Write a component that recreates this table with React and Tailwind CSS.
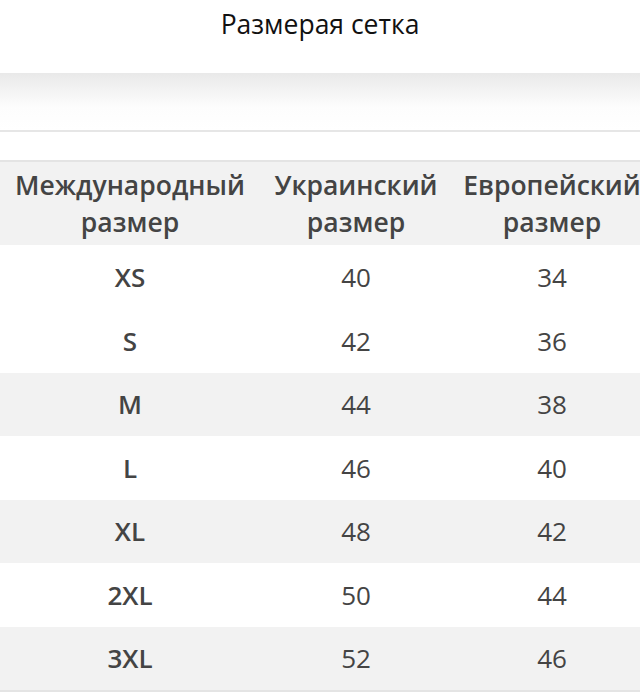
import React from "react";

const rows = [
  { intl: "XS", ua: "40", eu: "34", gray: false, h: "h-[64px]" },
  { intl: "S", ua: "42", eu: "36", gray: false, h: "h-[64px]" },
  { intl: "M", ua: "44", eu: "38", gray: true, h: "h-[63px]" },
  { intl: "L", ua: "46", eu: "40", gray: false, h: "h-[64px]" },
  { intl: "XL", ua: "48", eu: "42", gray: true, h: "h-[63px]" },
  { intl: "2XL", ua: "50", eu: "44", gray: false, h: "h-[64px]" },
  { intl: "3XL", ua: "52", eu: "46", gray: true, h: "h-[63px]" },
];

const App = () => {
  return (
    <div className="w-[640px] h-[699px] overflow-hidden bg-white font-['Open_Sans',sans-serif]">
      {/* Title */}
      <div className="h-[73px] pt-[6px]">
        <h1 className="text-center text-[26.5px] leading-[36px] text-[#111]">
          Размерая сетка
        </h1>
      </div>

      {/* Shaded band */}
      <div className="h-[57px] bg-gradient-to-b from-[#e9e9e9] via-[#fdfdfd] via-60% to-white"></div>
      <div className="h-[2px] bg-[#e6e6e6]"></div>
      <div className="h-[28px]"></div>
      <div className="h-[2px] bg-[#e4e4e4]"></div>

      {/* Table */}
      <div className="w-[652px]">
        <div className="grid grid-cols-[260px_192px_200px] h-[83px] items-center bg-[#f2f2f2] text-[#444] text-[26.5px] leading-[37px] font-semibold text-center">
          <div>
            Международный
            <br />
            размер
          </div>
          <div>
            Украинский
            <br />
            размер
          </div>
          <div className="whitespace-nowrap">
            Европейский
            <br />
            размер
          </div>
        </div>

        {rows.map((r) => (
          <div
            key={r.intl}
            className={`grid grid-cols-[260px_192px_200px] items-center text-center text-[26px] text-[#444] ${r.h} ${
              r.gray ? "bg-[#f2f2f2]" : "bg-white"
            }`}
          >
            <div className="font-semibold">{r.intl}</div>
            <div>{r.ua}</div>
            <div>{r.eu}</div>
          </div>
        ))}
        <div className="h-[2px] bg-[#e4e4e4]"></div>
      </div>
    </div>
  );
};

export default App;
